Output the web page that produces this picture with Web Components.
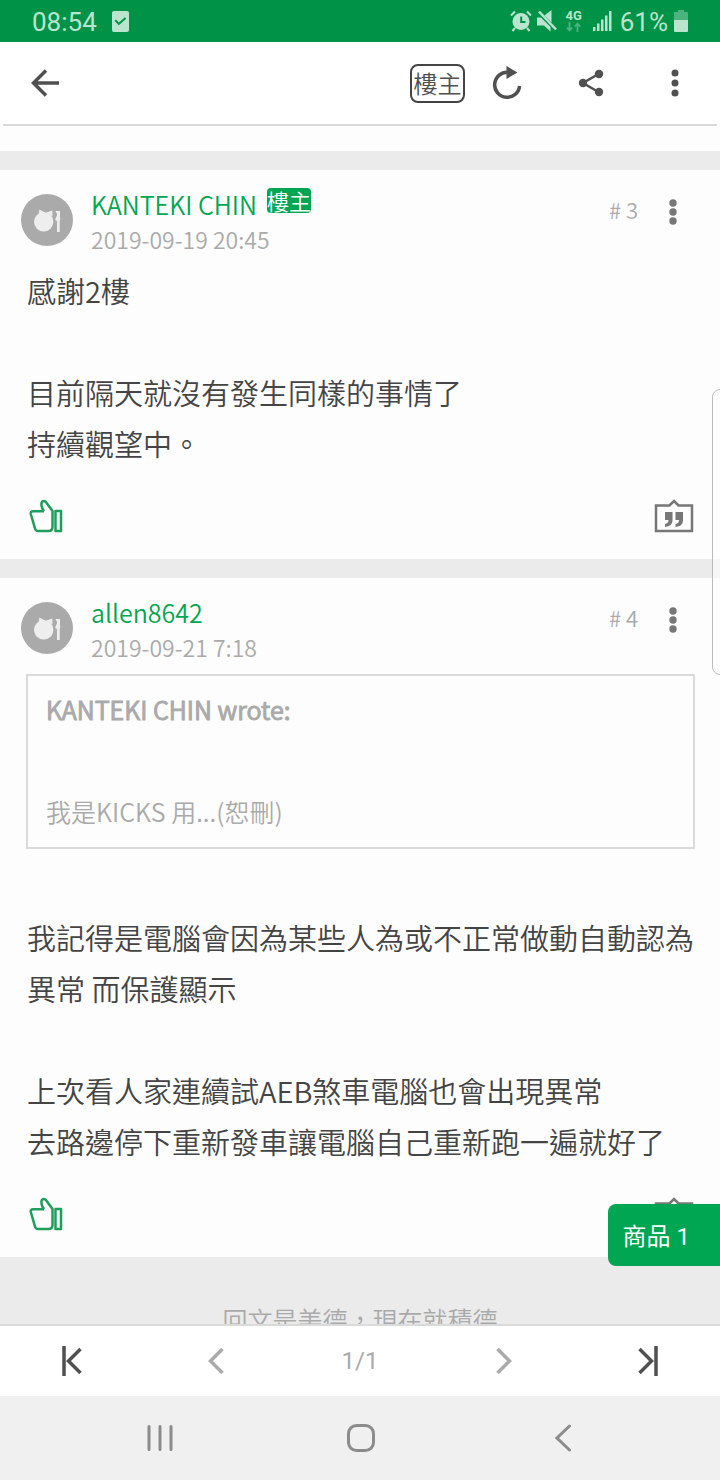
<!DOCTYPE html>
<html lang="zh-Hant">
<head>
<meta charset="utf-8">
<meta name="viewport" content="width=device-width, initial-scale=1">
<title>討論串</title>
<style>
  html, body {
    height: 100%;
    margin: 0;
  }

  body {
    font-family: "Noto Sans CJK TC", sans-serif;
    font-weight: 350;
    color: #444;
  }
</style>
</head>
<body>
<thread-app>
  <status-bar slot="top" time="08:54" battery="61%"></status-bar>
  <thread-toolbar slot="top"></thread-toolbar>

  <thread-post author="KANTEKI CHIN" date="2019-09-19 20:45" floor="3" owner>
    <post-text>感謝2樓<br><br>目前隔天就沒有發生同樣的事情了<br>持續觀望中。</post-text>
  </thread-post>
  <thread-post author="allen8642" date="2019-09-21 7:18" floor="4">
    <post-quote author="KANTEKI CHIN">我是KICKS 用...(恕刪)</post-quote>
    <post-text><br>我記得是電腦會因為某些人為或不正常做動自動認為異常 而保護顯示<br><br>上次看人家連續試AEB煞車電腦也會出現異常<br>去路邊停下重新發車讓電腦自己重新跑一遍就好了</post-text>
  </thread-post>

  <goods-button slot="overlay" count="1"></goods-button>
  <page-nav slot="bottom" page="1" total="1"></page-nav>
  <system-nav slot="bottom"></system-nav>
</thread-app>

<script>
const buttonReset = `
  button {
    display: grid;
    place-items: center;
    margin: 0;
    padding: 0;
    border: 0;
    background: none;
    color: inherit;
    font: inherit;
    cursor: pointer;
  }

  svg {
    display: block;
  }
`;

class ThreadApp extends HTMLElement {
  constructor() {
    super();

    this.attachShadow({mode: "open"});
    this.shadowRoot.innerHTML = `
      <style>
        :host {
          display: flex;
          flex-direction: column;
          height: 100vh;
          background: #fff;
        }

        .view {
          flex: 1;
          min-height: 0;
          display: flex;
          flex-direction: column;
          position: relative;
        }

        main {
          flex: 1;
          min-height: 0;
          overflow-y: auto;
          scrollbar-width: none;
          background: #ebebeb;
        }

        .previous {
          height: 25px;
          background: #fdfdfd;
        }

        .slogan {
          margin: 0;
          padding: 44px 0;
          text-align: center;
          font-size: 25px;
          line-height: 36px;
          color: #aaa;
        }

        .handle {
          position: absolute;
          top: 263px;
          right: -8px;
          width: 14px;
          height: 284px;
          border: 1px solid #bbb;
          border-radius: 10px;
          background: rgb(255 255 255 / 60%);
        }

        .clip {
          position: absolute;
          inset: 0;
          overflow: hidden;
          pointer-events: none;
        }
      </style>
      <slot name="top"></slot>
      <div class="view">
        <main>
          <div class="previous"></div>
          <slot></slot>
          <p class="slogan">回文是美德，現在就積德</p>
        </main>
        <div class="clip"><div class="handle"></div></div>
        <slot name="overlay"></slot>
      </div>
      <slot name="bottom"></slot>
    `;
  }
}

class StatusBar extends HTMLElement {
  constructor() {
    super();

    this.attachShadow({mode: "open"});
    this.shadowRoot.innerHTML = `
      <style>
        :host {
          display: flex;
          align-items: center;
          height: 42px;
          padding: 0 32px;
          background: #009348;
          color: #b9e4cd;
          font: 26px/42px Roboto, sans-serif;
        }

        svg {
          display: block;
          fill: currentColor;
        }

        .time {
          padding-top: 2px;
          margin-right: 15px;
        }

        .level {
          padding-top: 2px;
          margin: 0 6px 0 8px;
        }

        .icons {
          display: flex;
          align-items: center;
          gap: 5px;
          margin-left: auto;
        }

        .network {
          display: grid;
          justify-items: center;
          width: 20px;
          margin: 0 4px 0 2px;
          font-size: 13px;
          line-height: 12px;
          font-weight: 700;
        }
      </style>
      <span class="time">${this.getAttribute("time")}</span>
      <svg width="17" height="21" viewBox="0 0 17 21"><path fill-rule="evenodd" d="M2 0h13a2 2 0 0 1 2 2v17a2 2 0 0 1-2 2H2a2 2 0 0 1-2-2V2a2 2 0 0 1 2-2zM3.900 8.500L2.600 10l4.200 4.200L14.200 7.700 12.900 6.300 6.900 11.500z"/></svg>
      <div class="icons">
        <svg width="22" height="22" viewBox="0 0 22 22">
          <circle cx="11" cy="11.500" r="8.500"/>
          <path d="M11.200 6.500v5.500h4.300" fill="none" stroke="#009348" stroke-width="2"/>
          <path d="M1 5.500L5 1.500M21 5.500L17 1.500M5 18l-2.500 3M17 18l2.500 3" fill="none" stroke="currentColor" stroke-width="2"/>
        </svg>
        <svg width="20" height="22" viewBox="0 0 20 22">
          <path d="M0 7.500h4l9.500 9.500v4.500L7 15.500H0zM7.500 5.500L14.500 0v12.500z"/>
          <path d="M2 1.500l17 18" fill="none" stroke="currentColor" stroke-width="2.500"/>
        </svg>
        <div class="network">
          4G
          <svg width="15" height="10" viewBox="0 0 15 10"><path d="M3.500 0v8M.8 5.500L3.500 8.500 6.200 5.500M11.500 10V1.500M8.800 4.500L11.500 1.500 14.200 4.500" fill="none" stroke="#4bb37e" stroke-width="1.800"/></svg>
        </div>
        <svg width="19" height="20" viewBox="0 0 19 20"><path d="M0 16h2.500v4H0zM4 12.500h2.500V20H4zM8 8.500h2.500V20H8zM12 4.500h2.500V20H12zM16 0h2.500v20H16z"/></svg>
      </div>
      <span class="level">${this.getAttribute("battery")}</span>
      <svg width="14" height="22" viewBox="0 0 14 22"><path fill="#4bb37e" d="M4 0h6v2h3a1 1 0 0 1 1 1v7H0V3a1 1 0 0 1 1-1h3z"/><path d="M0 10h14v11a1 1 0 0 1-1 1H1a1 1 0 0 1-1-1z"/></svg>
    `;
  }
}

class ThreadToolbar extends HTMLElement {
  constructor() {
    super();

    this.attachShadow({mode: "open"});
    this.shadowRoot.innerHTML = `
      <style>
        ${buttonReset}

        :host {
          display: block;
          padding: 0 3px;
          background: linear-gradient(#fff 82px, #fdfdfd 82px);
        }

        header {
          display: flex;
          align-items: center;
          height: 82px;
          border-bottom: 2px solid #dadada;
          color: #505050;
        }

        .icon {
          width: 84px;
          height: 82px;
        }

        .owner {
          margin-left: auto;
          width: 55px;
          height: 39px;
          padding-bottom: 2px;
          border: 2px solid #444;
          border-radius: 8px;
          font-size: 24px;
          line-height: 33px;
          white-space: nowrap;
        }
      </style>
      <header>
        <button class="icon" aria-label="返回">
          <svg width="30" height="28" viewBox="0 0 30 28" fill="none" stroke="currentColor" stroke-width="3.500"><path d="M29 14H4M16 1.500L3.500 14 16 26.500"/></svg>
        </button>
        <button class="owner">樓主</button>
        <button class="icon" aria-label="重新整理">
          <svg width="30" height="34" viewBox="0 0 30 34"><path d="M16 6.300A12.500 12.500 0 1 0 27.600 20" fill="none" stroke="currentColor" stroke-width="3.500"/><path d="M14.500 0L25.500 6.500 14.500 13z" fill="currentColor"/></svg>
        </button>
        <button class="icon" aria-label="分享">
          <svg width="26" height="28" viewBox="0 0 26 28" fill="currentColor"><path d="M20.500 5L5 14l15.500 9" fill="none" stroke="currentColor" stroke-width="2.500"/><circle cx="21" cy="5" r="4.200"/><circle cx="5" cy="14" r="4.200"/><circle cx="21" cy="23" r="4.200"/></svg>
        </button>
        <button class="icon" aria-label="更多選項">
          <svg width="8" height="28" viewBox="0 0 8 28" fill="currentColor"><circle cx="4" cy="4" r="3.500"/><circle cx="4" cy="14" r="3.500"/><circle cx="4" cy="24" r="3.500"/></svg>
        </button>
      </header>
    `;
  }
}

class ThreadPost extends HTMLElement {
  constructor() {
    super();

    const badge = this.hasAttribute("owner") ? `<span class="badge">樓主</span>` : "";

    this.attachShadow({mode: "open"});
    this.shadowRoot.innerHTML = `
      <style>
        ${buttonReset}

        :host {
          display: block;
          border-top: 19px solid #ebebeb;
          background: #fdfdfd;
        }

        header {
          display: flex;
          align-items: flex-start;
          height: 71px;
          padding: 24px 25px 0 21px;
        }

        .who {
          flex: 1;
          margin: -7px 0 0 18px;
        }

        .name {
          display: flex;
          align-items: flex-start;
          gap: 10px;
          font-size: 25px;
          line-height: 35px;
        }

        .name a {
          color: #00a651;
          text-decoration: none;
        }

        .badge {
          height: 25px;
          margin-top: 1px;
          border-radius: 4px;
          background: #00a651;
          color: #fff;
          font-size: 22px;
          line-height: 25px;
        }

        time, .floor {
          display: block;
          font-size: 23px;
          line-height: 35px;
          color: #aaa;
        }

        .floor {
          margin: -2px 13px 0 0;
          font-size: 22px;
        }

        .more {
          width: 44px;
          height: 36px;
          color: #777;
        }

        .body {
          padding: 0 25px 0 27px;
        }

        footer {
          display: flex;
          align-items: center;
          justify-content: space-between;
          padding: 30px 26px 26px 29px;
        }

        .like {
          color: #1f9d5b;
        }

        .reply {
          color: #777;
        }
      </style>
      <article>
        <header>
          <svg width="52" height="52" viewBox="0 0 52 52">
            <circle cx="26" cy="26" r="26" fill="#aaa"/>
            <circle cx="22.700" cy="27.800" r="9.700" fill="#eee"/>
            <path fill="#eee" d="M18.300 15.500l5.700 3-6.500 3.500zM31.300 16.500l.2 6-6-4z"/>
            <path fill="#eee" d="M34.500 17H39v5.500l.3 2.500-.6 2V38H36V27l-1.800-1 .8-3 1-1v-2z"/>
          </svg>
          <div class="who">
            <div class="name"><a href="#user">${this.getAttribute("author")}</a>${badge}</div>
            <time>${this.getAttribute("date")}</time>
          </div>
          <span class="floor"># ${this.getAttribute("floor")}</span>
          <button class="more" aria-label="更多選項">
            <svg width="8" height="26" viewBox="0 0 8 26" fill="currentColor"><circle cx="4" cy="4" r="3.700"/><circle cx="4" cy="13" r="3.700"/><circle cx="4" cy="22" r="3.700"/></svg>
          </button>
        </header>
        <div class="body"><slot></slot></div>
        <footer>
          <button class="like" aria-label="讚">
            <svg width="34" height="34" viewBox="0 0 34 34" fill="none" stroke="currentColor" stroke-width="2.500" stroke-linejoin="round">
              <path d="M15 12.200H4Q1.200 12.200 1.800 15L6 29.500Q6.700 32 9 32H19.500Q23.500 32 23.500 28V12L18 4.500Q16.500 1.500 14 2.200 12 3 12.500 6.500Q13 10 15 12.200"/>
              <path d="M26.500 12h5.500v20h-5.500z"/>
            </svg>
          </button>
          <button class="reply" aria-label="引言回覆">
            <svg width="40" height="34" viewBox="0 0 40 34">
              <path d="M2 6.500H15.500L20 2l4.500 4.500H38V32H2z" fill="none" stroke="currentColor" stroke-width="2.500"/>
              <path d="M11 13h7.500v8.500q0 5.500-7.500 6.500v-3q3.500-.5 3.500-4H11zM21.500 13H29v8.500q0 5.500-7.500 6.500v-3q3.500-.5 3.500-4h-3.500z" fill="currentColor"/>
            </svg>
          </button>
        </footer>
      </article>
    `;
  }
}

class PostText extends HTMLElement {
  constructor() {
    super();

    this.attachShadow({mode: "open"});
    this.shadowRoot.innerHTML = `
      <style>
        :host {
          display: block;
          font-size: 29px;
          line-height: 51px;
        }
      </style>
      <slot></slot>
    `;
  }
}

class PostQuote extends HTMLElement {
  constructor() {
    super();

    this.attachShadow({mode: "open"});
    this.shadowRoot.innerHTML = `
      <style>
        :host {
          display: block;
          margin: 0 0 12px -1px;
          padding-top: 1px;
        }

        blockquote {
          margin: 0;
          padding: 8px 18px 10px;
          border: 2px solid #dadada;
          font-size: 25px;
          line-height: 51px;
          color: #aaa;
        }

        b {
          display: block;
          margin-bottom: 51px;
          font-weight: inherit;
          -webkit-text-stroke: 1px;
        }
      </style>
      <blockquote>
        <b>${this.getAttribute("author")} wrote:</b>
        <slot></slot>
      </blockquote>
    `;
  }
}

class GoodsButton extends HTMLElement {
  constructor() {
    super();

    this.attachShadow({mode: "open"});
    this.shadowRoot.innerHTML = `
      <style>
        ${buttonReset}

        :host {
          display: block;
          position: absolute;
          right: 0;
          bottom: 58px;
        }

        button {
          height: 62px;
          padding: 4px 30px 0 15px;
          border-radius: 8px 0 0 8px;
          background: #00a651;
          color: #fff;
          font: 24px/58px Roboto, "Noto Sans CJK TC", sans-serif;
        }
      </style>
      <button>商品 ${this.getAttribute("count")}</button>
    `;
  }
}

class PageNav extends HTMLElement {
  constructor() {
    super();

    this.attachShadow({mode: "open"});
    this.shadowRoot.innerHTML = `
      <style>
        ${buttonReset}

        :host {
          display: block;
          border-top: 2px solid #dadada;
          background: #fff;
        }

        nav {
          display: grid;
          grid-template-columns: repeat(5, 1fr);
          place-items: center;
          height: 70px;
          color: #505050;
          font: 24px/70px Roboto, sans-serif;
        }

        button {
          width: 100%;
          height: 70px;
        }

        .dim {
          color: #aaa;
        }

        path {
          fill: none;
          stroke: currentColor;
          stroke-width: 3.500px;
        }
      </style>
      <nav>
        <button aria-label="第一頁"><svg width="20" height="30" viewBox="0 0 20 30"><path d="M2 0v30M18.500 3L6.500 15l12 12"/></svg></button>
        <button class="dim" aria-label="上一頁"><svg width="16" height="28" viewBox="0 0 16 28"><path d="M14.500 2L2.500 14l12 12"/></svg></button>
        <span class="dim">${this.getAttribute("page")}/${this.getAttribute("total")}</span>
        <button class="dim" aria-label="下一頁"><svg width="16" height="28" viewBox="0 0 16 28"><path d="M1.500 2l12 12-12 12"/></svg></button>
        <button aria-label="最後一頁"><svg width="20" height="30" viewBox="0 0 20 30"><path d="M18 0v30M1.500 3l12 12-12 12"/></svg></button>
      </nav>
    `;
  }
}

class SystemNav extends HTMLElement {
  constructor() {
    super();

    this.attachShadow({mode: "open"});
    this.shadowRoot.innerHTML = `
      <style>
        ${buttonReset}

        :host {
          display: grid;
          grid-template-columns: repeat(3, 1fr);
          padding: 0 56px 0 59px;
          background: #f0f0f0;
          color: #8c8c8c;
        }

        button {
          height: 84px;
        }

        svg {
          fill: none;
          stroke: currentColor;
          stroke-width: 3px;
          stroke-linecap: round;
        }
      </style>
      <button aria-label="最近使用"><svg width="26" height="28" viewBox="0 0 26 28"><path d="M2 2.500v23M13 2.500v23M24 2.500v23"/></svg></button>
      <button aria-label="主畫面"><svg width="28" height="28" viewBox="0 0 28 28"><rect x="1.500" y="1.500" width="25" height="25" rx="8"/></svg></button>
      <button aria-label="返回"><svg width="16" height="28" viewBox="0 0 16 28"><path d="M14.500 2L2 14l12.500 12"/></svg></button>
    `;
  }
}

customElements.define("thread-app", ThreadApp);
customElements.define("status-bar", StatusBar);
customElements.define("thread-toolbar", ThreadToolbar);
customElements.define("thread-post", ThreadPost);
customElements.define("post-text", PostText);
customElements.define("post-quote", PostQuote);
customElements.define("goods-button", GoodsButton);
customElements.define("page-nav", PageNav);
customElements.define("system-nav", SystemNav);
</script>
</body>
</html>
